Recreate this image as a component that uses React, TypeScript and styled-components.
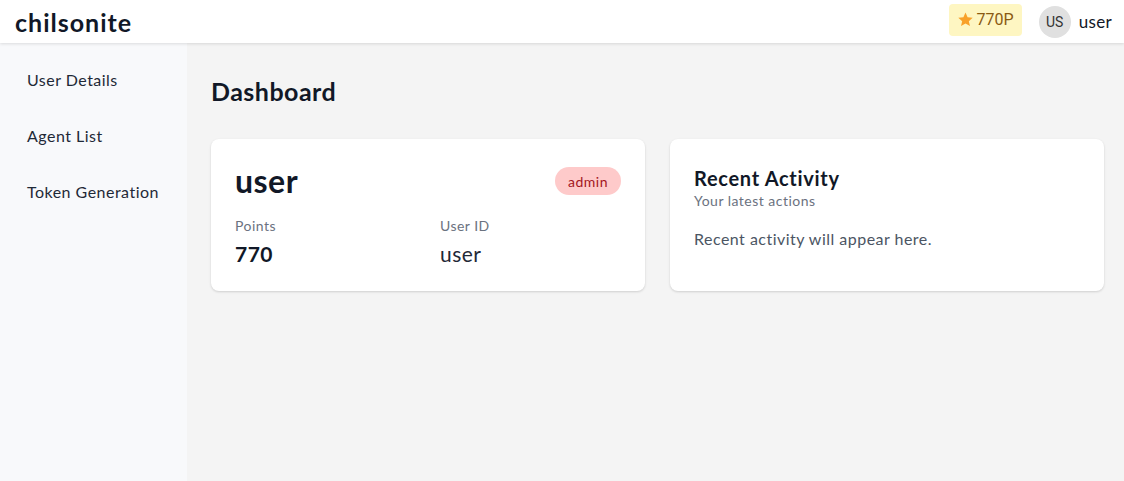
import React from "react";
import styled, { createGlobalStyle } from "styled-components";

const GlobalStyle = createGlobalStyle`
  html, body { margin: 0; padding: 0; }
  body {
    font-family: "Lato", "Noto Sans", sans-serif;
    background: #f4f4f4;
    color: #111827;
    letter-spacing: 0.03em;
  }
  * { box-sizing: border-box; }
`;

const Page = styled.div`
  display: flex;
  flex-direction: column;
  height: 481px;
  overflow: hidden;
`;

const Header = styled.header`
  height: 43px;
  background: #ffffff;
  display: flex;
  align-items: center;
  justify-content: space-between;
  padding: 0 12px 0 15px;
  box-shadow: 0 1px 3px rgba(0, 0, 0, 0.12);
  position: relative;
  z-index: 2;
  flex-shrink: 0;
`;

const Logo = styled.div`
  font-size: 25px;
  font-weight: 700;
  color: #111827;
  letter-spacing: 0.04em;
`;

const HeaderRight = styled.div`
  display: flex;
  align-items: center;
  letter-spacing: 0;
`;

const PointsBadge = styled.div`
  display: flex;
  align-items: center;
  gap: 3px;
  height: 32px;
  padding: 0 8px;
  border-radius: 4px;
  background: #fef6c2;
  color: #8a5a12;
  font-family: "Roboto", "Liberation Sans", sans-serif;
  font-size: 16px;
  margin-right: 17px;
  margin-top: -4px;
`;

const Avatar = styled.div`
  width: 32px;
  height: 32px;
  border-radius: 50%;
  background: #e0e0e0;
  color: #333;
  display: flex;
  align-items: center;
  justify-content: center;
  font-family: "Roboto", "Liberation Sans", sans-serif;
  font-size: 14px;
  margin-right: 8px;
`;

const UserName = styled.span`
  font-size: 17px;
  color: #111827;
  letter-spacing: 0.02em;
`;

const Body = styled.div`
  display: flex;
  flex: 1;
  min-height: 0;
`;

const Sidebar = styled.nav`
  width: 187px;
  background: #f8f9fb;
  display: flex;
  flex-direction: column;
  padding: 25px 0 0 27px;
  flex-shrink: 0;
`;

const NavItem = styled.div`
  height: 56px;
  font-size: 16px;
  color: #1f2937;
  line-height: 24px;
`;

const Main = styled.main`
  flex: 1;
  padding: 24px 20px 24px 24px;
`;

const Title = styled.h1`
  margin: 8px 0 32px;
  font-size: 25px;
  font-weight: 700;
  color: #111827;
  line-height: 32px;
`;

const Grid = styled.div`
  display: grid;
  grid-template-columns: 1fr 1fr;
  gap: 25px;
`;

const Card = styled.section`
  background: #ffffff;
  border-radius: 8px;
  box-shadow: 0 1px 3px rgba(0, 0, 0, 0.1), 0 1px 2px rgba(0, 0, 0, 0.06);
  padding: 24px;
  height: 152px;
`;

const CardTop = styled.div`
  display: flex;
  align-items: center;
  justify-content: space-between;
  margin-top: -2px;
`;

const BigName = styled.div`
  font-size: 32px;
  font-weight: 700;
  line-height: 40px;
  color: #111827;
`;

const Role = styled.span`
  background: #fecaca;
  color: #a3161d;
  font-size: 14px;
  height: 28px;
  padding: 0 13px;
  border-radius: 14px;
  display: flex;
  align-items: center;
`;

const Stats = styled.div`
  display: grid;
  grid-template-columns: 1fr 1fr;
  gap: 24px;
  margin-top: 15px;
`;

const StatLabel = styled.div`
  font-size: 14px;
  color: #6b7280;
  line-height: 20px;
`;

const StatValue = styled.div<{ $bold?: boolean }>`
  font-size: 21px;
  font-weight: ${(p) => (p.$bold ? 700 : 400)};
  color: ${(p) => (p.$bold ? "#111827" : "#1f2937")};
  line-height: 28px;
  margin-top: 4px;
`;

const CardTitle = styled.h2`
  margin: 1px 0 0;
  font-size: 20px;
  font-weight: 700;
  line-height: 28px;
  color: #111827;
  letter-spacing: 0.035em;
`;

const CardSub = styled.div`
  font-size: 14px;
  color: #6b7280;
  line-height: 16px;
  margin-top: 1px;
`;

const CardText = styled.p`
  margin: 18px 0 0;
  font-size: 16px;
  color: #4b5563;
  line-height: 24px;
`;

const Star = () => (
  <svg width="17" height="17" viewBox="0 0 24 24" aria-hidden="true">
    <path
      fill="#f8a12a"
      d="M12 2.2l2.95 6.6 7.2.7-5.45 4.8 1.6 7.05L12 17.7l-6.3 3.65 1.6-7.05L1.85 9.5l7.2-.7z"
    />
  </svg>
);

export default function App() {
  return (
    <>
      <GlobalStyle />
      <Page>
        <Header>
          <Logo>chilsonite</Logo>
          <HeaderRight>
            <PointsBadge>
              <Star />
              770P
            </PointsBadge>
            <Avatar>US</Avatar>
            <UserName>user</UserName>
          </HeaderRight>
        </Header>
        <Body>
          <Sidebar>
            <NavItem>User Details</NavItem>
            <NavItem>Agent List</NavItem>
            <NavItem>Token Generation</NavItem>
          </Sidebar>
          <Main>
            <Title>Dashboard</Title>
            <Grid>
              <Card>
                <CardTop>
                  <BigName>user</BigName>
                  <Role>admin</Role>
                </CardTop>
                <Stats>
                  <div>
                    <StatLabel>Points</StatLabel>
                    <StatValue $bold>770</StatValue>
                  </div>
                  <div>
                    <StatLabel>User ID</StatLabel>
                    <StatValue>user</StatValue>
                  </div>
                </Stats>
              </Card>
              <Card>
                <CardTitle>Recent Activity</CardTitle>
                <CardSub>Your latest actions</CardSub>
                <CardText>Recent activity will appear here.</CardText>
              </Card>
            </Grid>
          </Main>
        </Body>
      </Page>
    </>
  );
}
